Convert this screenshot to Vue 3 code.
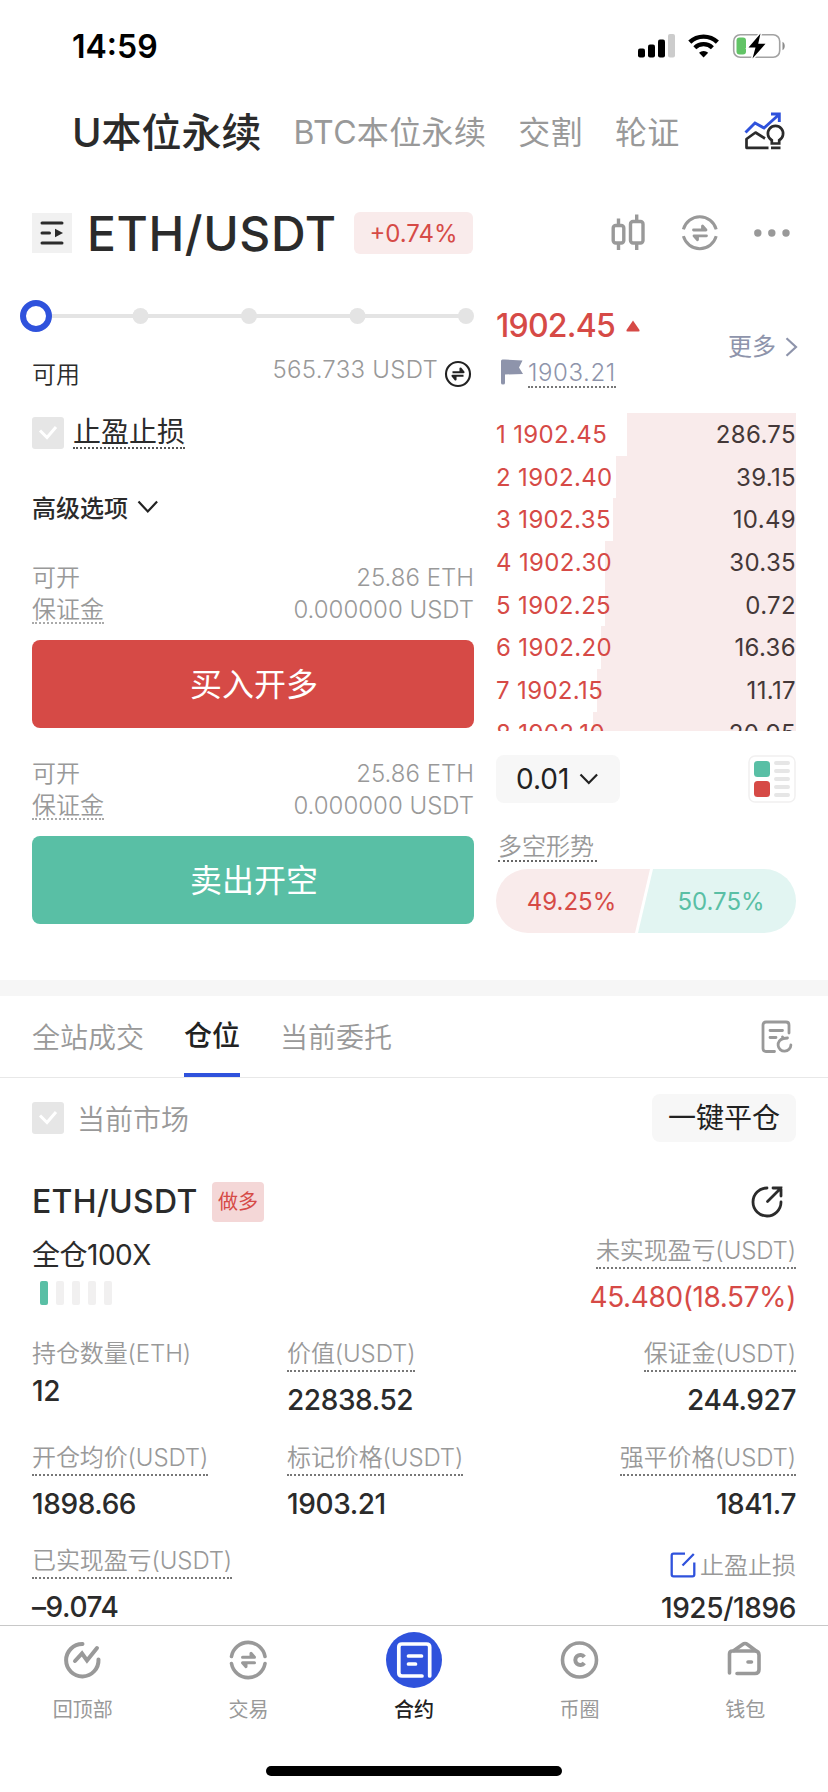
<script setup>
const marketTabs = ['BTC本位永续', '交割', '轮证']

const asks = [
  { n: 1, price: '1902.45', amount: '286.75', depth: 169.5 },
  { n: 2, price: '1902.40', amount: '39.15', depth: 180 },
  { n: 3, price: '1902.35', amount: '10.49', depth: 183 },
  { n: 4, price: '1902.30', amount: '30.35', depth: 191 },
  { n: 5, price: '1902.25', amount: '0.72', depth: 191 },
  { n: 6, price: '1902.20', amount: '16.36', depth: 195.5 },
  { n: 7, price: '1902.15', amount: '11.17', depth: 199 },
  { n: 8, price: '1902.10', amount: '20.95', depth: 203.5 },
]

const orders = [
  { side: 'buy', label: '买入开多' },
  { side: 'sell', label: '卖出开空' },
]

const stats = [
  { label: '持仓数量(ETH)', value: '12', plain: true },
  { label: '价值(USDT)', value: '22838.52' },
  { label: '保证金(USDT)', value: '244.927', end: true },
  { label: '开仓均价(USDT)', value: '1898.66' },
  { label: '标记价格(USDT)', value: '1903.21' },
  { label: '强平价格(USDT)', value: '1841.7', end: true },
  { label: '已实现盈亏(USDT)', value: '–9.074' },
]
</script>

<template>
  <div class="page">
    <div class="screen">
      <header class="status">
        <span class="clock">14:59</span>
        <svg class="status-icons" width="150" height="26" viewBox="0 0 150 26">
          <rect x="0" y="15.500" width="7" height="9" rx="2" />
          <rect x="10" y="11.500" width="7" height="13" rx="2" />
          <rect x="20" y="6.500" width="7" height="18" rx="2" />
          <rect x="30" y="1" width="7" height="23.500" rx="2" fill="#ccc" />
          <g fill="none" stroke="#000">
            <path d="M51.800 9.200a19.800 19.800 0 0 1 27.600 0" stroke-width="4.400" />
            <path d="M56.800 14.700a12.600 12.600 0 0 1 17.600 0" stroke-width="4.200" />
          </g>
          <path d="M65.600 24.500l-4.600-4.700a6.800 6.800 0 0 1 9.200 0z" />
          <rect x="95.700" y="1.700" width="46" height="22.600" rx="6.500" fill="none" stroke="#a2a2a2" stroke-width="1.600" />
          <path d="M144.500 8.800v8.400c3-1.400 3-7 0-8.400z" fill="#8c8c8c" />
          <rect x="98.500" y="4.500" width="9.500" height="17" rx="3" fill="#62c466" />
          <path d="M122.500.500l-12 14h7l-3 11 13-14.800h-7.300z" stroke="#fff" stroke-width="3" paint-order="stroke" />
        </svg>
      </header>

      <nav class="markets">
        <span class="market-on">U本位永续</span>
        <span v-for="t in marketTabs" :key="t" class="market">{{ t }}</span>
        <svg class="market-icon" width="42" height="40" viewBox="0 0 42 40" fill="none" stroke-width="2.700">
          <path d="M1.500 20.500L11 11l9 5L34.500 3M27 2h8.300v8" stroke="#2f52dc" stroke-width="2.900" />
          <g stroke="#2b2b2b">
            <path d="M24.500 35.800H2.500V27l9-6.500 9.500 6" stroke-linejoin="round" />
            <path d="M27.800 31.500v-3.300a7.600 7.600 0 1 1 7.400 0v3.300zM27 35.800h9.500" />
          </g>
        </svg>
      </nav>

      <div class="pair">
        <span class="pair-switch">
          <svg width="24" height="26" viewBox="0 0 24 26" fill="none" stroke="#2b2b2b" stroke-width="3" stroke-linecap="round">
            <path d="M2 3h20M2 13h7.500M2 23h20" />
            <path d="M15 8.800v8.400l8-4.200z" fill="#2b2b2b" stroke="none" />
          </svg>
        </span>
        <span class="pair-name">ETH/USDT</span>
        <span class="change">+0.74%</span>
        <svg class="pair-tools" width="180" height="40" viewBox="0 0 180 40" fill="none" stroke="#999" stroke-width="3.400">
          <rect x="3.200" y="12.500" width="10.600" height="17.500" rx="2.500" />
          <path d="M8.500 5.500v7M8.500 30v7" />
          <rect x="20.500" y="8.500" width="12.500" height="21.500" rx="2.500" />
          <path d="M26.700 1.500v7M26.700 30v7" />
          <g stroke-width="3">
            <path d="M73.400 16.300a17 17 0 0 1 32.800 0M73.400 23.200a17 17 0 0 0 32.800 0" />
            <path d="M83.500 17h12.500l-3.500-4V17M96.500 22.800H84l3.500 4v-4" stroke-width="2.800" stroke-linejoin="round" stroke-linecap="round" />
          </g>
          <g fill="#999" stroke="none"><circle cx="147.800" cy="20" r="3.700" /><circle cx="161.800" cy="20" r="3.700" /><circle cx="176" cy="20" r="3.700" /></g>
        </svg>
      </div>

      <div class="trade">
        <section class="form">
          <svg class="slider" width="454" height="46" viewBox="0 0 454 46">
            <path d="M16 23h430" stroke="#e4e4e4" stroke-width="4" />
            <g fill="#e4e4e4"><circle cx="120.500" cy="23" r="8" /><circle cx="229" cy="23" r="8" /><circle cx="337.500" cy="23" r="8" /><circle cx="446" cy="23" r="8" /></g>
            <circle cx="16" cy="23" r="13" fill="#fff" stroke="#2f52dc" stroke-width="6" />
          </svg>

          <div class="avail">
            <span class="avail-label">可用</span>
            <span class="avail-num">565.733 USDT</span>
            <svg width="28" height="28" viewBox="0 0 28 28" fill="none" stroke="#222" stroke-width="2.100" stroke-linejoin="round">
              <circle cx="14" cy="14" r="12" />
              <path d="M8.500 12.200h11l-3-3.700v3.700M19.500 15.800h-11l3 3.700v-3.700" />
            </svg>
          </div>

          <div class="tpsl">
            <span class="check"><svg width="20" height="16" viewBox="0 0 20 16" fill="none" stroke="#fff" stroke-width="3"><path d="M2 5.500l7 7 9-10.500" /></svg></span>
            <span class="tpsl-text">止盈止损</span>
          </div>

          <div class="advanced">
            <span>高级选项</span>
            <svg width="22" height="14" viewBox="0 0 22 14" fill="none" stroke="#222" stroke-width="2.200"><path d="M1.500 1.500l9.300 10 9.300-10" /></svg>
          </div>

          <div v-for="o in orders" :key="o.side" class="order">
            <div class="line"><span>可开</span><span class="num">25.86 ETH</span></div>
            <div class="line"><span class="margin-label">保证金</span><span class="num">0.000000 USDT</span></div>
            <button class="btn" :class="o.side">{{ o.label }}</button>
          </div>
        </section>

        <section class="book">
          <div class="quote">
            <div>
              <div class="last">1902.45<svg width="14" height="12" viewBox="0 0 14 12"><path d="M7 .500L13.500 10q.500 1.500-1 1.500h-11Q0 11.500.500 10z" fill="#d64a46" /></svg></div>
              <div class="mark">
                <svg width="22" height="26" viewBox="0 0 22 26" fill="#8e94ab"><path d="M0 2q0-1.500 1.500-1.500H4l17.500 1-3.500 7 4 6.500-18 .500V24q0 1.500-2 1.500T0 24z" /></svg>
                <span>1903.21</span>
              </div>
            </div>
            <div class="more">更多<svg width="13" height="20" viewBox="0 0 13 20" fill="none" stroke="#8e94ab" stroke-width="2.200"><path d="M1.500 1.200l9.500 8.800-9.500 8.800" /></svg></div>
          </div>

          <div class="asks">
            <div v-for="a in asks" :key="a.n" class="ask">
              <span class="ask-price">{{ a.n }} {{ a.price }}</span>
              <span class="ask-depth" :style="{ width: a.depth + 'px' }">{{ a.amount }}</span>
            </div>
          </div>

          <div class="controls">
            <span class="tick">0.01<svg width="20" height="12" viewBox="0 0 20 12" fill="none" stroke="#222" stroke-width="2.200"><path d="M1.500 1.500l8.300 8.500 8.300-8.500" /></svg></span>
            <svg width="48" height="48" viewBox="0 0 48 48">
              <rect x="1" y="1" width="46" height="46" rx="6" fill="#fff" stroke="#f1f0f0" stroke-width="1.500" />
              <rect x="6" y="6" width="16" height="16" rx="3.500" fill="#59bfa5" />
              <rect x="6" y="26" width="16" height="16" rx="3.500" fill="#d64a46" />
              <path d="M28 8h12M28 16h12M28 24h12M28 32h12M28 40h12" stroke="#e6e6e6" stroke-width="4" stroke-linecap="round" />
            </svg>
          </div>

          <div><span class="trend-title">多空形势</span></div>
          <div class="trend">
            <span class="long">49.25%</span>
            <span class="short">50.75%</span>
          </div>
        </section>
      </div>

      <div class="band"></div>

      <div class="tabs">
        <span>全站成交</span>
        <span class="tab-on">仓位</span>
        <span>当前委托</span>
        <svg width="34" height="34" viewBox="0 0 34 34" fill="none" stroke="#999" stroke-width="2.800" stroke-linecap="round">
          <path d="M14.500 31.500H6q-3 0-3-3V5q0-3 3-3h20q3 0 3 3v8M10 10.500h12.500M10 17.500h6" />
          <path d="M23.500 18.500a6.400 6.400 0 1 0 7.400 6.500M23.500 18.500l-1-1.500M23.500 18.500l4-.500" />
        </svg>
      </div>

      <div class="current">
        <span class="check"><svg width="20" height="16" viewBox="0 0 20 16" fill="none" stroke="#fff" stroke-width="3"><path d="M2 5.500l7 7 9-10.500" /></svg></span>
        <span class="current-text">当前市场</span>
        <span class="close-all">一键平仓</span>
      </div>

      <div class="pos-head">
        <span class="pos-name">ETH/USDT</span>
        <span class="pos-side">做多</span>
        <svg width="34" height="34" viewBox="0 0 34 34" fill="none" stroke="#2b2b2b" stroke-width="2.800" stroke-linecap="round">
          <path d="M17 3a14 14 0 1 0 14 14" />
          <path d="M17.500 16.500L31 3M23 3h8v8" />
        </svg>
      </div>

      <div class="pos-sum">
        <div>
          <div class="lever">全仓100X</div>
          <div class="risk"><i></i><i></i><i></i><i></i><i></i></div>
        </div>
        <div class="pnl">
          <span class="label">未实现盈亏(USDT)</span>
          <div class="pnl-value">45.480(18.57%)</div>
        </div>
      </div>

      <div class="stats">
        <div v-for="s in stats" :key="s.label" :class="{ plain: s.plain, end: s.end }">
          <span class="label">{{ s.label }}</span>
          <div class="value">{{ s.value }}</div>
        </div>
        <div></div>
        <div class="end edit">
          <div class="edit-label">
            <svg width="26" height="26" viewBox="0 0 26 26" fill="none" stroke="#2f52dc" stroke-width="2.300">
              <path d="M15 1.700H3.500Q1.700 1.700 1.700 3.500v19q0 1.800 1.800 1.800h19q1.800 0 1.800-1.800V10.500M12.500 13.500L23.800 2" />
            </svg>
            <span>止盈止损</span>
          </div>
          <div class="value">1925/1896</div>
        </div>
      </div>
    </div>

    <footer class="bar">
      <div class="bar-item">
        <svg width="56" height="56" viewBox="0 0 56 56" fill="none" stroke="#999" stroke-width="4" stroke-linecap="round">
          <path d="M27.500 12a16.200 16.200 0 1 0 16 15.500" />
          <path d="M20 29l7-7.500 5 7L42 16" />
        </svg>
        <span>回顶部</span>
      </div>
      <div class="bar-item">
        <svg width="56" height="56" viewBox="0 0 56 56" fill="none" stroke="#999" stroke-width="3.600" stroke-linecap="round">
          <path d="M11.500 24.500a17 17 0 0 1 33.500 0M11.500 31.500a17 17 0 0 0 33.500 0" />
          <path d="M22.500 25.300h12l-3.500-4v4M34.500 30.700h-12l3.500 4v-4" stroke-width="3" stroke-linejoin="round" />
        </svg>
        <span>交易</span>
      </div>
      <div class="bar-item active">
        <svg width="56" height="56" viewBox="0 0 56 56" fill="none" stroke="#fff" stroke-width="3.700" stroke-linecap="round">
          <circle cx="28" cy="28" r="28" fill="#2f52dc" stroke="none" />
          <path d="M36 44H16q-3.200 0-3.200-3.200V15.200q0-3.200 3.200-3.200h24.500q3.200 0 3.200 3.200V44M22.500 24h13M22.500 32h7" />
        </svg>
        <span>合约</span>
      </div>
      <div class="bar-item">
        <svg width="56" height="56" viewBox="0 0 56 56" fill="none" stroke="#999" stroke-width="3.600">
          <circle cx="27.500" cy="28" r="17" />
          <path d="M32.300 25a5 5 0 1 0 0 6" stroke-width="4" />
        </svg>
        <span>币圈</span>
      </div>
      <div class="bar-item">
        <svg width="56" height="56" viewBox="0 0 56 56" fill="none" stroke="#999" stroke-width="3.600" stroke-linecap="round" stroke-linejoin="round">
          <path d="M12.500 41V22q0-3 3-3H38q4 0 4 4v14.500q0 4-4 4H20" />
          <path d="M17 18.500l8.500-6q2.500-2 5 0l8 6M31 30h3.500" />
        </svg>
        <span>钱包</span>
      </div>
    </footer>
    <div class="home"></div>
  </div>
</template>

<style>
body { margin: 0; background: #fff; }
</style>

<style scoped>
.page {
  width: 828px;
  height: 1792px;
  overflow: hidden;
  background: #fff;
  color: #2b2b2b;
  font-family: Inter, "Noto Sans CJK SC", sans-serif;
  font-size: 24px;
  white-space: nowrap;
}
svg { display: block; flex: none; }
.screen { height: 1625px; overflow: hidden; }

.status { height: 91px; display: flex; align-items: center; color: #000; }
.clock { margin-left: 72px; font-size: 32px; font-weight: 600; line-height: 89px; padding-top: 2px; width: 566px; }

.markets { height: 82px; padding: 0 42px 0 72px; display: flex; align-items: center; line-height: 82px; }
.market-on { font-size: 40px; font-weight: 450; margin-right: 32px; padding-top: 2px; }
.market { font-size: 32px; color: #999; margin-right: 32px; letter-spacing: 0.35px; padding-top: 1px; }
.market-icon { margin-left: auto; }

.pair { height: 120px; display: flex; align-items: center; padding: 0 32px; }
.pair-switch { width: 40px; height: 40px; background: #f1f1f1; display: flex; align-items: center; justify-content: center; }
.pair-name { font-size: 48px; margin-left: 15px; width: 267px; line-height: 118px; padding-top: 2px; letter-spacing: 0.6px; font-weight: 450; }
.change { width: 119px; height: 41px; padding-top: 1px; line-height: 41px; border-radius: 6px; background: #f9ebeb; color: #d64a46; text-align: center; }
.pair-tools { margin-left: auto; margin-right: 6px; }

.trade { height: 687px; display: flex; }
.form { width: 442px; padding-left: 32px; }
.slider { margin-left: -12px; }
.avail { height: 70px; display: flex; align-items: center; }
.avail-label { font-weight: 350; margin-top: -4px; }
.avail-num { margin: -9px 6px 0 auto; color: #999; font-weight: 300; letter-spacing: 0.28px; }
.avail svg { margin-right: 2px; }
.tpsl { height: 48px; display: flex; align-items: center; }
.check { width: 32px; height: 32px; border-radius: 3px; background: #e6e6e6; display: flex; align-items: center; justify-content: center; }
.tpsl-text { margin-left: 9px; font-size: 28px; line-height: 30px; border-bottom: 2px dotted #555; }
.advanced { height: 102px; margin-bottom: 3px; display: flex; align-items: center; gap: 9px; font-weight: 450; }
.advanced span { margin-top: -4px; }
.advanced svg { margin-top: -2px; }
.order { height: 151px; padding-bottom: 15px; margin-bottom: 30px; color: #999; }
.line { height: 32px; line-height: 32px; display: flex; justify-content: space-between; font-weight: 350; }
.margin-label { height: 24px; line-height: 24px; margin-top: 4px; border-bottom: 2px dotted #aaa; }
.num { font-weight: 350; }
.btn { display: block; width: 442px; height: 88px; margin: 14px 0 0; padding: 2px 0 0 2px; border: 0; border-radius: 8px; color: #fff; font: 400 32px/86px Inter, "Noto Sans CJK SC", sans-serif; text-align: center; }
.buy { background: #d64a46; }
.sell { background: #59bfa5; }

.book { width: 300px; margin-left: 22px; }
.quote { height: 120px; display: flex; justify-content: space-between; }
.last { margin-top: 11px; height: 44px; line-height: 44px; font-size: 32px; font-weight: 450; letter-spacing: -0.75px; color: #d64a46; display: flex; align-items: center; gap: 11px; }
.mark { margin: 11px 0 0 5px; display: flex; color: #8e94ab; font-weight: 300; letter-spacing: 0.6px; }
.mark span { margin-left: 5px; line-height: 27px; border-bottom: 2px dotted #777; }
.more { margin-top: 37px; height: 34px; line-height: 34px; color: #8e94ab; display: flex; align-items: center; gap: 9px; margin-right: -2px; }
.asks { height: 318px; overflow: hidden; letter-spacing: 0.35px; }
.ask { height: 42.67px; line-height: 44px; display: flex; justify-content: space-between; }
.ask-price { color: #d64a46; width: 0; position: relative; z-index: 1; }
.ask-depth { background: #f9ebeb; color: #443838; text-align: right; box-sizing: border-box; }
.controls { height: 48px; margin-top: 24px; display: flex; justify-content: space-between; }
.tick { width: 104px; padding-left: 20px; border-radius: 8px; background: #f7f7f7; color: #222; font-size: 28px; line-height: 48px; display: flex; align-items: center; gap: 10px; }
.trend-title { display: inline-block; margin: 31px 0 0 2px; padding-right: 3px; color: #999; font-weight: 350; line-height: 26px; border-bottom: 2px dotted #666; vertical-align: top; }
.trend { height: 64px; margin-top: 7px; border-radius: 32px; overflow: hidden; display: flex; line-height: 65px; text-align: center; }
.long { width: 154px; margin-right: -13px; background: #f9ebeb; color: #d64a46; clip-path: polygon(0 0, 100% 0, 139px 100%, 0 100%); text-indent: -3px; }
.short { flex: 1; background: #e2f5f2; color: #59bfa5; clip-path: polygon(16px 0, 100% 0, 100% 100%, 1px 100%); text-indent: 9px; }

.band { height: 16px; background: #f6f6f6; }
.tabs { height: 81px; border-bottom: 1px solid #e8e8e8; padding: 0 34px 0 32px; display: flex; align-items: center; font-size: 28px; color: #999; font-weight: 350; }
.tabs span { height: 77px; line-height: 81px; margin-right: 40px; }
.tabs .tab-on { color: #222; font-weight: 450; border-bottom: 4px solid #2f52dc; }
.tabs svg { margin-left: auto; }

.current { height: 80px; padding: 0 32px; display: flex; align-items: center; font-size: 28px; }
.current-text { margin-left: 13px; color: #999; font-weight: 350; }
.close-all { margin-left: auto; width: 144px; height: 47px; padding-top: 1px; line-height: 47px; border-radius: 8px; background: #f7f7f7; color: #222; text-align: center; }

.pos-head { margin-top: 13px; height: 61px; padding: 0 44px 0 32px; display: flex; align-items: center; }
.pos-name { font-size: 32px; width: 180px; font-weight: 450; letter-spacing: 0.3px; }
.pos-side { width: 52px; height: 40px; line-height: 40px; border-radius: 4px; background: #f4d7d7; color: #d64a46; font-size: 20px; text-align: center; }
.pos-head svg { margin-left: auto; }
.pos-sum { height: 106px; padding: 0 32px; display: flex; justify-content: space-between; }
.lever { margin-top: 3px; font-size: 28px; line-height: 40px; letter-spacing: -0.5px; font-weight: 430; }
.risk { margin: 6px 0 0 8px; display: flex; gap: 8px; }
.risk i { width: 8px; height: 24px; border-radius: 2px; background: #f1f0f0; }
.risk i:first-child { background: #59bfa5; }
.pnl { padding-top: 3px; text-align: right; }
.label { display: inline-block; vertical-align: top; line-height: 32px; color: #999; font-weight: 350; letter-spacing: -0.1px; border-bottom: 2px dotted #777; }
.pnl-value { margin-top: 8px; font-size: 28px; line-height: 40px; color: #d64a46; letter-spacing: -0.4px; }
.stats { padding: 0 32px; display: grid; grid-template-columns: 255px 255px 254px; grid-auto-rows: 103.500px; }
.value { margin-top: 8px; font-size: 28px; font-weight: 470; letter-spacing: -0.4px; line-height: 40px; }
.plain .label { border: 0; }
.plain .value { margin-top: 1px; }
.end { text-align: right; }
.edit-label { display: flex; justify-content: flex-end; align-items: center; gap: 4px; height: 40px; color: #999; font-weight: 350; }
.edit-label span { margin-top: -3px; }
.edit .value { margin-top: 3px; }

.bar { height: 141px; border-top: 1px solid #c8c8c8; display: flex; box-sizing: border-box; padding-top: 6px; }
.bar-item { flex: 1; display: flex; flex-direction: column; align-items: center; font-size: 20px; line-height: 44px; color: #999; }
.active { color: #222; font-weight: 450; }
.home { width: 296px; height: 10px; margin: 0 auto; border-radius: 5px; background: #000; }
</style>
